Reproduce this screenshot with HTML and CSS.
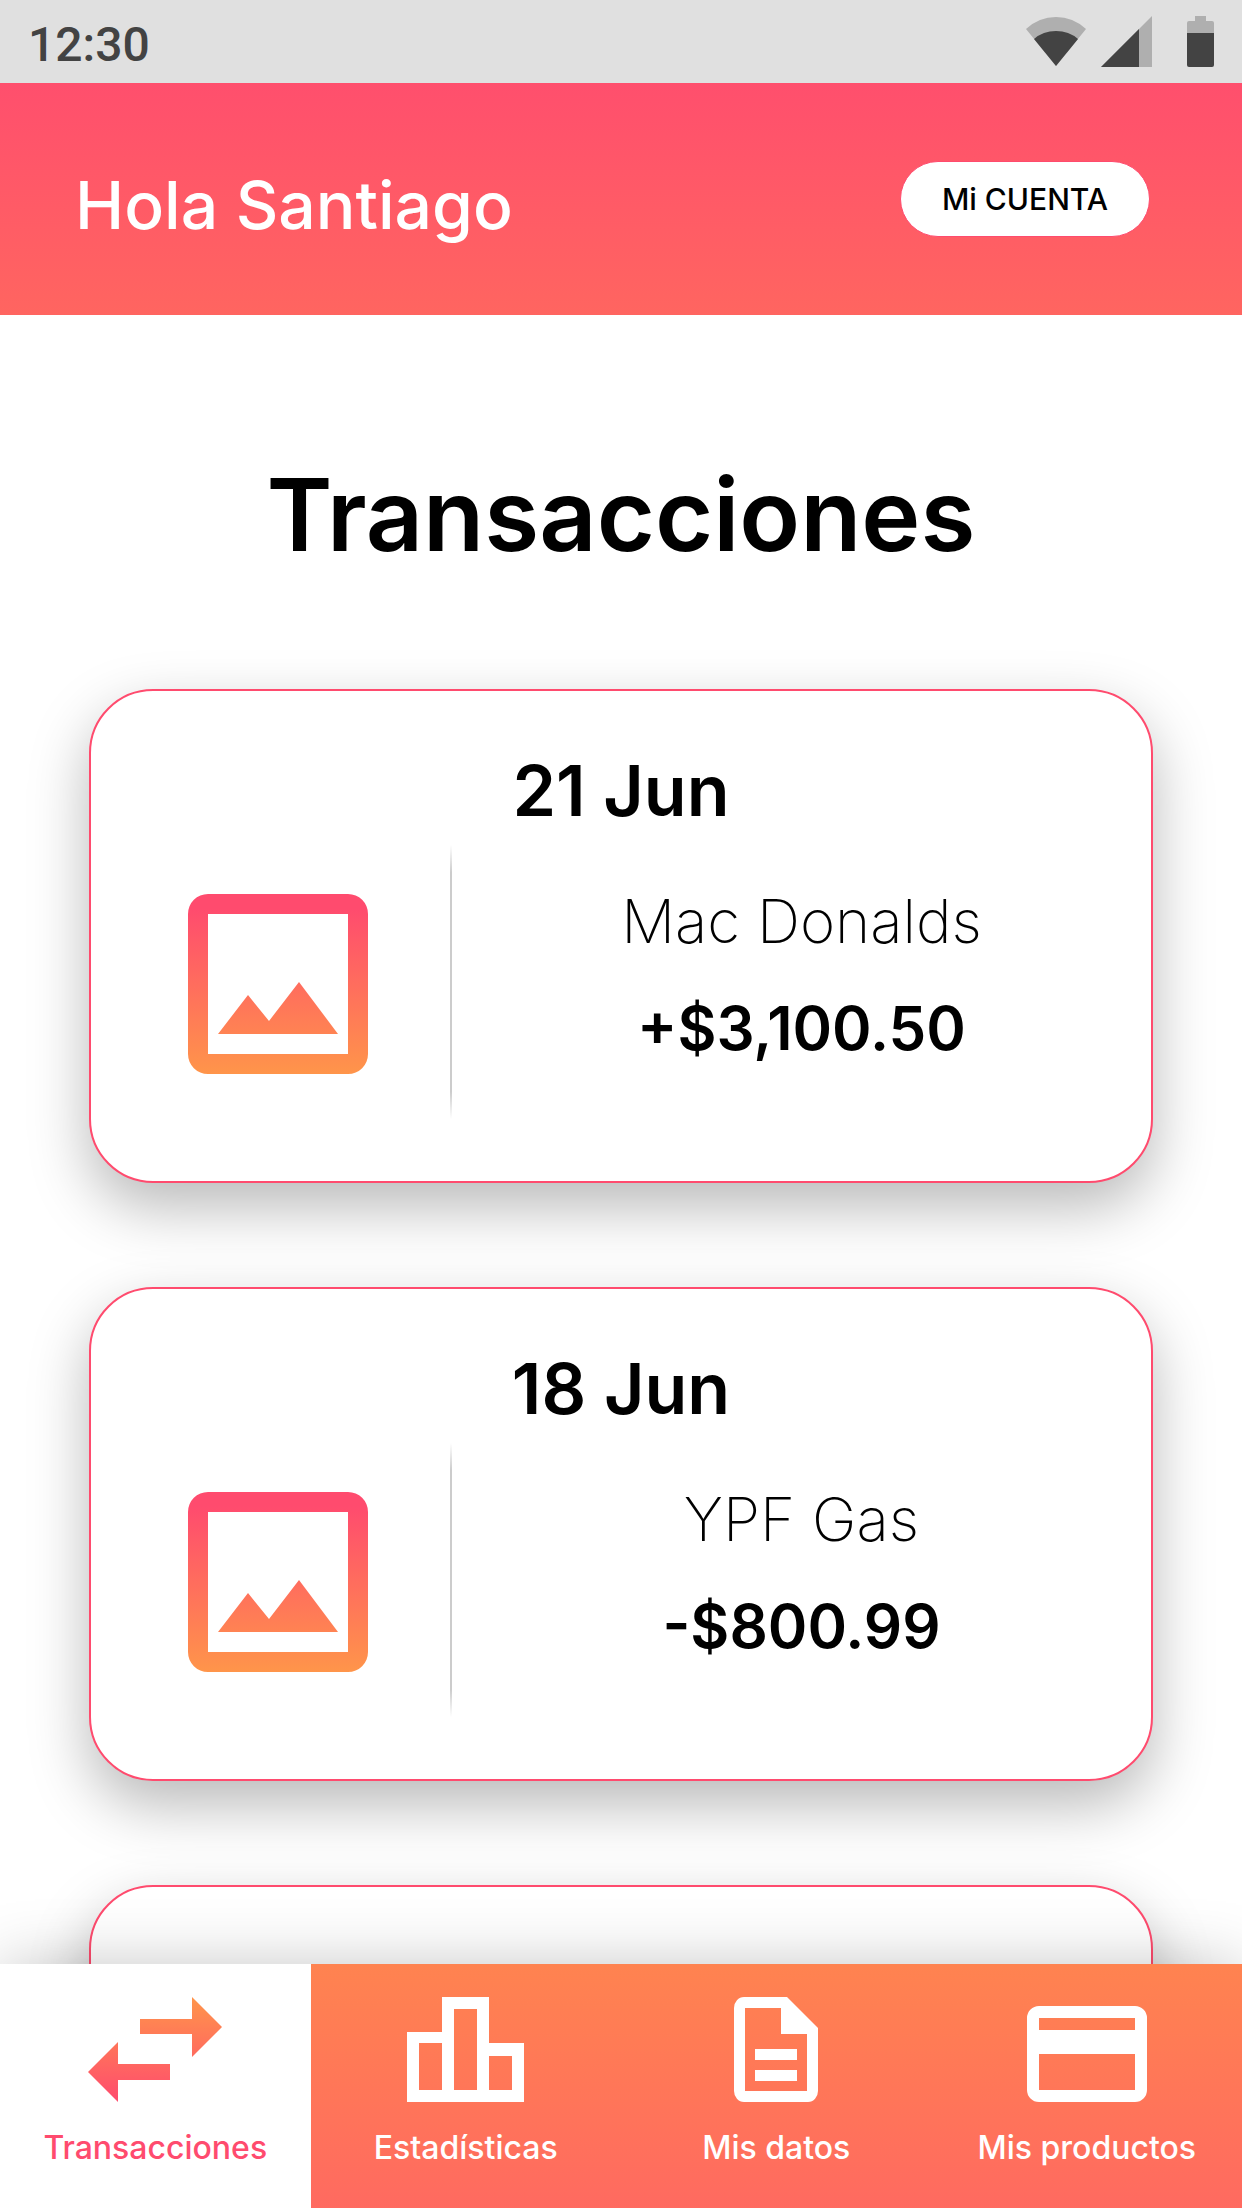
FILE: index.html
```html
<!DOCTYPE html>
<html lang="es">
<head>
<meta charset="utf-8">
<meta name="viewport" content="width=device-width, initial-scale=1">
<title>Transacciones</title>
<link rel="stylesheet" href="styles.css">
</head>
<body>
<svg class="defs" width="0" height="0" aria-hidden="true">
  <defs>
    <linearGradient id="warm" x1="0" y1="0" x2="0" y2="180" gradientUnits="userSpaceOnUse">
      <stop offset="0.08" stop-color="#ff4b6e"/><stop offset="1" stop-color="#ff954a"/>
    </linearGradient>
    <linearGradient id="warm-up" x1="0" y1="105" x2="0" y2="0" gradientUnits="userSpaceOnUse">
      <stop offset="0" stop-color="#ff4b6e"/><stop offset="1" stop-color="#ff954a"/>
    </linearGradient>
    <symbol id="picture" viewBox="0 0 180 180">
      <path fill="url(#warm)" fill-rule="evenodd" d="M20 0H160A20 20 0 0 1 180 20V160A20 20 0 0 1 160 180H20A20 20 0 0 1 0 160V20A20 20 0 0 1 20 0ZM20 20V160H160V20ZM30 140L60 101L81 127L111 88L150 140Z"/>
    </symbol>
  </defs>
</svg>

<div class="status">
  <span class="status-time">12:30</span>
  <div class="status-icons">
    <svg width="60" height="51" viewBox="0 0 60 51" aria-hidden="true">
      <path fill="#afafaf" d="M0 13Q13 1 30 1T60 13L30 50Z"/>
      <path fill="#434343" d="M8 23Q17 15 30 15T52 23L30 50Z"/>
    </svg>
    <svg class="signal" width="51" height="51" viewBox="0 0 51 51" aria-hidden="true">
      <path fill="#afafaf" d="M51 0V51H0Z"/>
      <path fill="#434343" d="M38 13V51H0Z"/>
    </svg>
    <svg width="27" height="51" viewBox="0 0 27 51" aria-hidden="true">
      <path fill="#afafaf" d="M8 0H19V5H25Q27 5 27 7V20H0V7Q0 5 2 5H8Z"/>
      <path fill="#434343" d="M0 17H27V49Q27 51 25 51H2Q0 51 0 49Z"/>
    </svg>
  </div>
</div>

<header class="header">
  <p class="greeting">Hola Santiago</p>
  <button class="account" type="button">Mi CUENTA</button>
</header>

<main class="content">
  <h1 class="title">Transacciones</h1>
  <div class="cards">
    <article class="card">
      <h2 class="date">21 Jun</h2>
      <div class="detail">
        <svg class="thumb" width="180" height="180" aria-hidden="true"><use href="#picture"/></svg>
        <div class="divider"></div>
        <div class="info">
          <p class="name">Mac Donalds</p>
          <p class="amount">+$3,100.50</p>
        </div>
      </div>
    </article>
    <article class="card">
      <h2 class="date">18 Jun</h2>
      <div class="detail">
        <svg class="thumb" width="180" height="180" aria-hidden="true"><use href="#picture"/></svg>
        <div class="divider"></div>
        <div class="info">
          <p class="name">YPF Gas</p>
          <p class="amount">-$800.99</p>
        </div>
      </div>
    </article>
    <article class="card"></article>
  </div>
</main>

<nav class="tabs">
  <a class="tab tab-active" href="#transacciones" aria-current="page">
    <svg class="tab-icon" width="134" height="105" viewBox="0 0 134 105" aria-hidden="true">
      <path fill="url(#warm-up)" d="M134 30L104 0V22H52V37H104V60ZM0 75L30 45V67H82V83H30V105Z"/>
    </svg>
    Transacciones
  </a>
  <a class="tab" href="#estadisticas">
    <svg class="tab-icon" width="117" height="105" viewBox="0 0 117 105" aria-hidden="true">
      <path fill="#fff" fill-rule="evenodd" d="M35 0H82V46H117V105H0V35H35ZM12 46V93H35V46ZM47 12V93H70V12ZM82 59V93H105V59Z"/>
    </svg>
    Estadísticas
  </a>
  <a class="tab" href="#datos">
    <svg class="tab-icon" width="84" height="105" viewBox="0 0 84 105" aria-hidden="true">
      <path fill="#fff" fill-rule="evenodd" d="M10 0H53L84 31V94A10 11 0 0 1 74 105H10A10 11 0 0 1 0 94V11A10 11 0 0 1 10 0ZM11 11V94H73V37H47V11ZM21 52H63V63H21ZM21 73H63V84H21Z"/>
    </svg>
    Mis datos
  </a>
  <a class="tab" href="#productos">
    <svg class="tab-icon" width="120" height="105" viewBox="0 0 120 105" aria-hidden="true">
      <path fill="#fff" fill-rule="evenodd" d="M12 9H108A12 12 0 0 1 120 21V93A12 12 0 0 1 108 105H12A12 12 0 0 1 0 93V21A12 12 0 0 1 12 9ZM12 21V33H108V21ZM12 57V93H108V57Z"/>
    </svg>
    Mis productos
  </a>
</nav>
</body>
</html>
```
FILE: styles.css
```css
* {
  box-sizing: border-box;
}

body {
  display: flex;
  flex-direction: column;
  height: 100vh;
  margin: 0;
  overflow: hidden;
  background: #fff;
  color: #000;
  font-family: Inter, "Liberation Sans", sans-serif;
}

h1,
h2,
p {
  margin: 0;
}

.defs {
  position: absolute;
}

.status {
  display: flex;
  flex: none;
  justify-content: space-between;
  align-items: center;
  padding: 16px 28px;
  background: #e0e0e0;
}

.status-time {
  padding-top: 7px;
  color: #434343;
  font: 500 48px/44px Roboto, sans-serif;
}

.status-icons {
  display: flex;
  gap: 15px;
}

.signal {
  margin-right: 20px;
}

.header {
  display: flex;
  flex: none;
  justify-content: space-between;
  align-items: center;
  padding: 72px 92px 72px 75px;
  background: linear-gradient(#ff4f6d, #ff6560);
}

.greeting {
  padding-top: 12px;
  color: #fff;
  font-size: 66px;
  font-weight: 500;
  line-height: 76px;
}

.account {
  width: 250px;
  height: 76px;
  padding: 0;
  border: 1px solid #ff4b6e;
  border-radius: 38px;
  background: #fff;
  color: #000;
  font: 500 30px/36px Inter, "Liberation Sans", sans-serif;
}

.content {
  flex: 1;
  min-height: 0;
  overflow-y: auto;
  padding: 140px 89px 0;
  scrollbar-width: none;
}

.title {
  margin-bottom: 114px;
  font-size: 100px;
  font-weight: 600;
  line-height: 120px;
  text-align: center;
}

.cards {
  display: flex;
  flex-direction: column;
  gap: 104px;
}

.card {
  min-height: 494px;
  padding: 60px 0;
  border: 2px solid #ff4b6e;
  border-radius: 64px;
  background: #fff;
  box-shadow: 0 24px 60px rgba(0, 0, 0, 0.28);
}

.date {
  margin-bottom: 14px;
  font-size: 70px;
  font-weight: 600;
  line-height: 80px;
  text-align: center;
}

.detail {
  display: flex;
  align-items: center;
}

.thumb {
  flex: none;
  margin: 4px 82px 0 97px;
}

.divider {
  flex: none;
  width: 2px;
  height: 274px;
  background: linear-gradient(transparent, #ccc 10%, #ccc 90%, transparent);
}

.info {
  display: flex;
  flex: 1;
  flex-direction: column;
  gap: 47px;
  padding-bottom: 16px;
  font-size: 60px;
  line-height: 60px;
  text-align: center;
}

.name {
  font-weight: 200;
}

.amount {
  font-weight: 600;
}

.tabs {
  display: grid;
  z-index: 1;
  flex: none;
  grid-template-columns: repeat(4, 1fr);
  background: linear-gradient(#ff8350, #ff6a60);
  box-shadow: 0 0 60px rgba(0, 0, 0, 0.22);
}

.tab {
  display: flex;
  flex-direction: column;
  gap: 26px;
  align-items: center;
  padding: 33px 0 40px;
  color: #fff;
  font-size: 32px;
  font-weight: 500;
  line-height: 40px;
  text-decoration: none;
}

.tab-active {
  background: #fff;
  color: #ff4b6e;
}
```
